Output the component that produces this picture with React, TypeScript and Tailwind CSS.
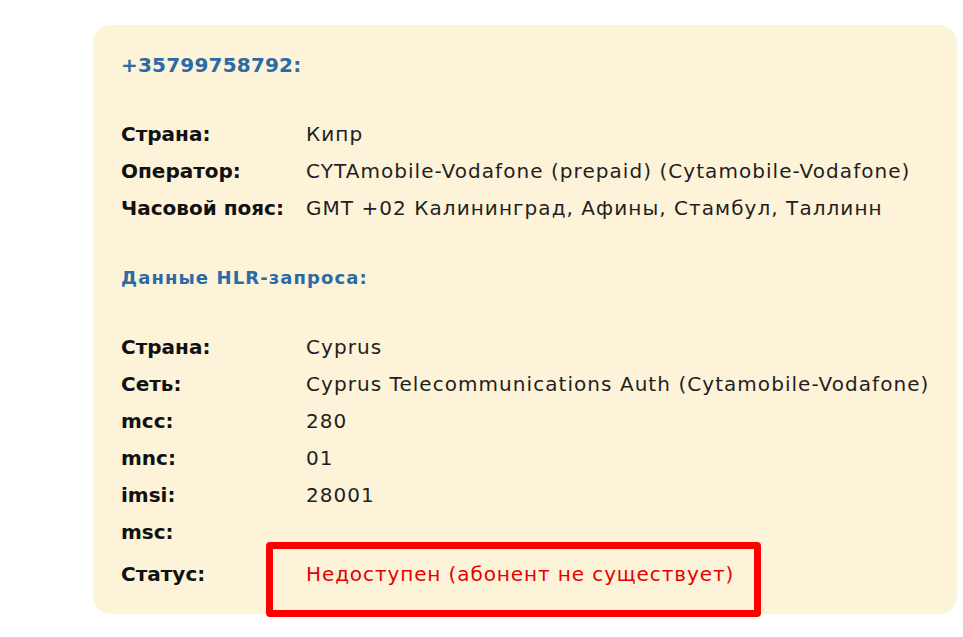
const phoneRows = [
  { label: "Страна:", value: "Кипр" },
  { label: "Оператор:", value: "CYTAmobile-Vodafone (prepaid) (Cytamobile-Vodafone)" },
  { label: "Часовой пояс:", value: "GMT +02 Калининград, Афины, Стамбул, Таллинн" },
];

const hlrRows = [
  { label: "Страна:", value: "Cyprus" },
  { label: "Сеть:", value: "Cyprus Telecommunications Auth (Cytamobile-Vodafone)" },
  { label: "mcc:", value: "280" },
  { label: "mnc:", value: "01" },
  { label: "imsi:", value: "28001" },
  { label: "msc:", value: "" },
];

function Row({ label, value }: { label: string; value: string }) {
  return (
    <div className="flex h-[37px] items-center">
      <div className="w-[185px] shrink-0 text-[20px] font-bold text-[#111]">{label}</div>
      <div className="text-[20px] tracking-[1.05px] text-[#1f1f1f]">{value}</div>
    </div>
  );
}

export default function App() {
  return (
    <div
      className="min-h-[637px] bg-white pt-[25px] pl-[93px] pr-[6px]"
      style={{ fontFamily: '"DejaVu Sans", "Noto Sans", sans-serif' }}
    >
      <div className="rounded-[18px] bg-[#fdf3d8] pt-[21px] pb-[22px] pl-[28px] pr-[20px]">
        <div className="flex h-[37px] items-center text-[20px] font-bold tracking-[0.2px] text-[#2c6aa5]">
          +35799758792:
        </div>

        <div className="mt-[32px]">
          {phoneRows.map((r) => (
            <Row key={r.label} {...r} />
          ))}
        </div>

        <div className="mt-[33px] flex h-[37px] items-center text-[18px] font-bold tracking-[1.1px] text-[#2c6aa5]">
          Данные HLR-запроса:
        </div>

        <div className="mt-[32px]">
          {hlrRows.map((r) => (
            <Row key={r.label} {...r} />
          ))}
          <div className="mt-[5px] flex h-[37px] items-center">
            <div className="w-[185px] shrink-0 text-[20px] font-bold text-[#111]">Статус:</div>
            <div className="relative text-[20px] tracking-[0.9px] text-[#e60000]">
              Недоступен (абонент не существует)
              <div className="absolute -left-[40px] -right-[27px] -top-[17px] -bottom-[28px] rounded-[4px] border-[7px] border-[#ff0000]" />
            </div>
          </div>
        </div>
      </div>
    </div>
  );
}
